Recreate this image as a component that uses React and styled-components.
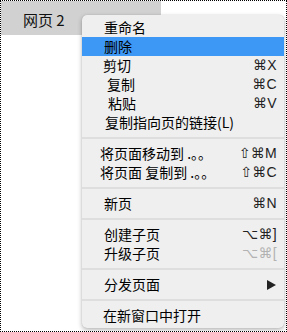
import React from "react";
import styled, { createGlobalStyle } from "styled-components";

const Global = createGlobalStyle`
  html, body { margin: 0; padding: 0; background: #fff; }
  * { box-sizing: border-box; }
`;

const Frame = styled.div`
  position: relative;
  width: 287px;
  height: 332px;
  border: 1px dotted #000;
  background: #fff;
  overflow: hidden;
`;

const Tab = styled.div`
  width: 160px;
  height: 34px;
  background: #d1d1d1;
  display: flex;
  align-items: center;
  padding-left: 22px;
  padding-top: 2px;
  font-family: "Noto Sans CJK SC", "Liberation Sans", sans-serif;
  font-size: 15px;
  color: #111;
`;

const Menu = styled.div`
  position: absolute;
  left: 81px;
  top: 14px;
  width: 202px;
  padding: 3px 0;
  background: #efefef;
  border-radius: 5px;
  box-shadow: 0 2px 5px rgba(0, 0, 0, 0.28), 0 0 1px rgba(0, 0, 0, 0.2);
  display: flex;
  flex-direction: column;
`;

const Row = styled.div`
  height: 19px;
  display: flex;
  align-items: center;
  justify-content: space-between;
  padding: 0 7px 0 ${(p) => 22 + (p.$shift || 0)}px;
  background: ${(p) => (p.$active ? "#3d97f5" : "transparent")};
  color: #000;
`;

const Label = styled.span`
  font-family: "Noto Sans CJK SC", "Liberation Sans", sans-serif;
  font-size: 14px;
  line-height: 19px;
  white-space: pre;
`;

const Key = styled.span`
  font-family: "Liberation Sans", "DejaVu Sans", sans-serif;
  font-size: 14px;
  line-height: 19px;
  color: ${(p) => (p.$disabled ? "#b2b2b2" : "#222")};
  letter-spacing: 0.3px;
`;

const Arrow = styled.span`
  width: 0;
  height: 0;
  border-top: 5px solid transparent;
  border-bottom: 5px solid transparent;
  border-left: 9px solid #222;
  margin-right: 1px;
`;

const Sep = styled.div`
  height: 2px;
  margin: 5px 0;
  background: #dedede;
`;

const groups = [
  [
    { t: "重命名" },
    { t: "删除", active: true },
    { t: "剪切", k: "⌘X", s: -1 },
    { t: "复制", k: "⌘C", s: 3 },
    { t: "粘贴", k: "⌘V", s: 4 },
    { t: "复制指向页的链接(L)", s: 1 },
  ],
  [
    { t: "将页面移动到 .。。", k: "⇧⌘M", s: -4 },
    { t: "将页面 复制到 .。。", k: "⇧⌘C", s: -4 },
  ],
  [{ t: "新页", k: "⌘N" }],
  [
    { t: "创建子页", k: "⌥⌘]" },
    { t: "升级子页", k: "⌥⌘[", dis: true },
  ],
  [{ t: "分发页面", arrow: true }],
  [{ t: "在新窗口中打开", s: -1 }],
];

export default function App() {
  return (
    <>
      <Global />
      <Frame>
        <Tab>网页 2</Tab>
        <Menu>
          {groups.map((g, gi) => (
            <React.Fragment key={gi}>
              {gi > 0 && <Sep />}
              {g.map((it, i) => (
                <Row key={i} $active={it.active} $shift={it.s}>
                  <Label>{it.t}</Label>
                  {it.k && <Key $disabled={it.dis}>{it.k}</Key>}
                  {it.arrow && <Arrow />}
                </Row>
              ))}
            </React.Fragment>
          ))}
        </Menu>
      </Frame>
    </>
  );
}
